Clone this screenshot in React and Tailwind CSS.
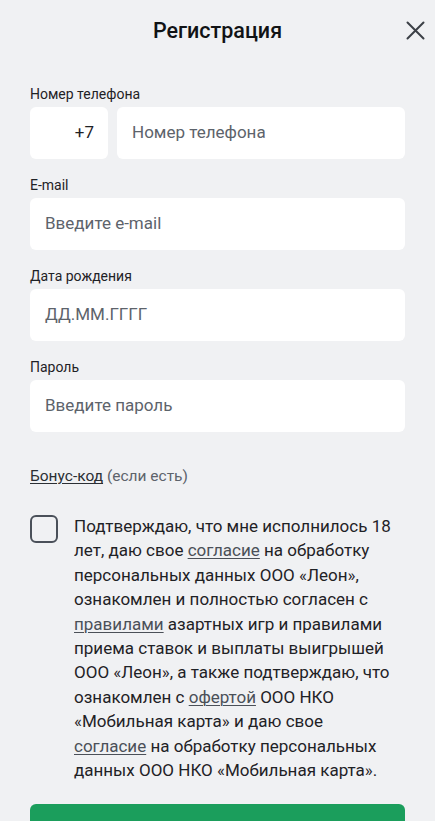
const font = { fontFamily: "Roboto, 'Noto Sans', sans-serif" };

function Field({ label, placeholder }) {
  return (
    <div className="mb-[18px]">
      <div className="text-[14px] leading-4 text-[#1f2226] mb-[5px]">{label}</div>
      <div className="h-[52px] bg-white rounded-md flex items-center px-[15px] text-[17px] text-[#5d636b]">
        {placeholder}
      </div>
    </div>
  );
}

function Link({ children }) {
  return <span className="underline underline-offset-2 decoration-1 text-[#4b5058]">{children}</span>;
}

export default function App() {
  return (
    <div style={font} className="h-[821px] bg-[#f0f1f3] overflow-hidden">
      <header className="relative h-[62px] flex items-center justify-center">
        <h1 className="text-[21.5px] font-medium text-[#111315]">Регистрация</h1>
        <button className="absolute right-[10px] top-[21px] text-[#3c4046]">
          <svg width="19" height="19" viewBox="0 0 19 19" fill="none" stroke="currentColor" strokeWidth="2" strokeLinecap="round">
            <path d="M1.5 1.5l16 16M17.5 1.5l-16 16" />
          </svg>
        </button>
      </header>

      <form className="px-[30px] pt-[24px]">
        <div className="mb-[18px]">
          <div className="text-[14px] leading-4 text-[#1f2226] mb-[5px]">Номер телефона</div>
          <div className="flex gap-[9px]">
            <div className="w-[78px] h-[52px] bg-white rounded-md flex items-center justify-end pr-[14px] text-[17px] text-[#1f2226]">
              +7
            </div>
            <div className="flex-1 h-[52px] bg-white rounded-md flex items-center px-[15px] text-[17px] text-[#5d636b]">
              Номер телефона
            </div>
          </div>
        </div>
        <Field label="E-mail" placeholder="Введите e-mail" />
        <Field label="Дата рождения" placeholder="ДД.ММ.ГГГГ" />
        <Field label="Пароль" placeholder="Введите пароль" />

        <div className="mt-[34px] text-[15.5px] leading-5 text-[#5d636b]">
          <span className="underline underline-offset-2 decoration-1 text-[#2b2f34]">Бонус-код</span> (если есть)
        </div>

        <div className="mt-[29px] flex gap-[16px]">
          <div className="w-[28px] h-[28px] shrink-0 rounded-md border-2 border-[#4a5059]" />
          <p className="whitespace-nowrap text-[17px] leading-[24.4px] text-[#1f2226] -mt-[1px]">
            Подтверждаю, что мне исполнилось 18<br />
            лет, даю свое <Link>согласие</Link> на обработку<br />
            персональных данных ООО «Леон»,<br />
            ознакомлен и полностью согласен с<br />
            <Link>правилами</Link> азартных игр и правилами<br />
            приема ставок и выплаты выигрышей<br />
            ООО «Леон», а также подтверждаю, что<br />
            ознакомлен с <Link>офертой</Link> ООО НКО<br />
            «Мобильная карта» и даю свое<br />
            <Link>согласие</Link> на обработку персональных<br />
            данных ООО НКО «Мобильная карта».
          </p>
        </div>

        <button type="button" className="mt-[22px] w-full h-[52px] rounded-md bg-[#1b9e5c]" />
      </form>
    </div>
  );
}
